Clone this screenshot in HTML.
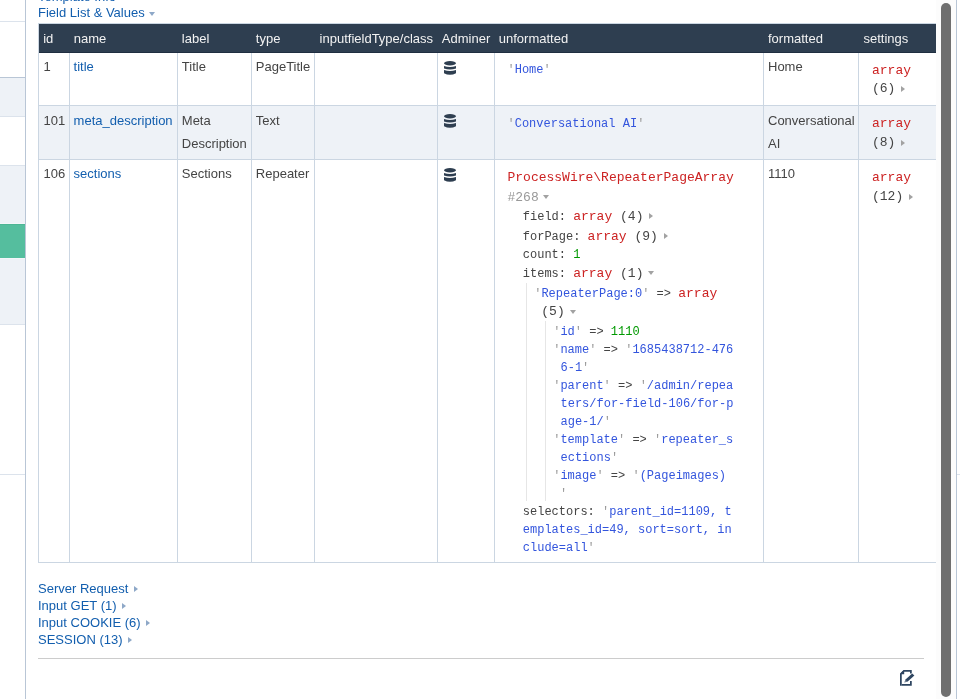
<!DOCTYPE html>
<html><head><meta charset="utf-8"><style>
html,body{margin:0;padding:0;background:#fff;width:960px;height:699px;overflow:hidden;position:relative}
#w{position:absolute;left:0;top:0;width:960px;height:699px;will-change:transform} #w>div{position:absolute}
.s{font-family:'Liberation Sans', sans-serif;font-size:13px;line-height:20px;white-space:pre}
.m{font-family:'Liberation Mono', monospace;font-size:12px;line-height:20px;white-space:pre;color:#444}
.t{font-size:13px} .str{color:#35D} .q{color:#999} .arr{color:#C22} .num{color:#090} .h{color:#999}
svg{display:block}
</style></head><body><div id="w">
<div style="left:0px;top:21px;width:25px;height:1px;background:#DCE3EC;"></div>
<div style="left:0px;top:77px;width:25px;height:1px;background:#B9C6D6;"></div>
<div style="left:0px;top:78px;width:25px;height:38px;background:#EEF2F7;"></div>
<div style="left:0px;top:116px;width:25px;height:1px;background:#DCE3EC;"></div>
<div style="left:0px;top:165px;width:25px;height:1px;background:#DCE3EC;"></div>
<div style="left:0px;top:166px;width:25px;height:57px;background:#EEF2F7;"></div>
<div style="left:0px;top:223px;width:25px;height:1px;background:#F4F6F9;"></div>
<div style="left:0px;top:224px;width:25px;height:34px;background:#55BE9E;"></div>
<div style="left:0px;top:224px;width:25px;height:1px;background:#4DB695;"></div>
<div style="left:0px;top:258px;width:25px;height:1px;background:#F4F6F9;"></div>
<div style="left:0px;top:259px;width:25px;height:65px;background:#EEF2F7;"></div>
<div style="left:0px;top:324px;width:25px;height:1px;background:#DCE3EC;"></div>
<div style="left:0px;top:474px;width:25px;height:1px;background:#DCE3EC;"></div>
<div style="left:25px;top:0px;width:1px;height:699px;background:#B9C6D6;"></div>
<div style="left:957px;top:474px;width:3px;height:1px;background:#DCE3EC;"></div>
<div style="left:936px;top:0px;width:20px;height:699px;background:#FCFCFC;"></div>
<div style="left:941px;top:3px;width:10px;height:694px;background:#6F6F6F;border-radius:5px"></div>
<div style="left:956px;top:0px;width:1px;height:699px;background:#B9C6D6;"></div>
<div class="s" style="left:38px;top:-13px;color:#125EAE;">Template Info</div>
<div class="s" style="left:38px;top:3px;color:#125EAE;">Field List &amp; Values</div>
<div style="left:149px;top:12px;width:0;height:0;border-left:3.0px solid transparent;border-right:3.0px solid transparent;border-top:4px solid #8EA8C8"></div>
<div style="left:38px;top:23px;width:898px;height:1px;background:#CBD6E2;"></div>
<div style="left:39px;top:24px;width:897px;height:28px;background:#2E3E50;"></div>
<div style="left:39px;top:52px;width:897px;height:1px;background:#1F2E40;"></div>
<div style="left:39px;top:106px;width:897px;height:53px;background:#EEF2F7;"></div>
<div style="left:38px;top:105px;width:898px;height:1px;background:#CBD6E2;"></div>
<div style="left:38px;top:159px;width:898px;height:1px;background:#CBD6E2;"></div>
<div style="left:38px;top:562px;width:898px;height:1px;background:#CBD6E2;"></div>
<div style="left:38px;top:23px;width:1px;height:540px;background:#CBD6E2;"></div>
<div style="left:69px;top:53px;width:1px;height:510px;background:#CBD6E2;"></div>
<div style="left:177px;top:53px;width:1px;height:510px;background:#CBD6E2;"></div>
<div style="left:251px;top:53px;width:1px;height:510px;background:#CBD6E2;"></div>
<div style="left:314px;top:53px;width:1px;height:510px;background:#CBD6E2;"></div>
<div style="left:437px;top:53px;width:1px;height:510px;background:#CBD6E2;"></div>
<div style="left:494px;top:53px;width:1px;height:510px;background:#CBD6E2;"></div>
<div style="left:763px;top:53px;width:1px;height:510px;background:#CBD6E2;"></div>
<div style="left:858px;top:53px;width:1px;height:510px;background:#CBD6E2;"></div>
<div class="s" style="left:43.2px;top:29px;color:#F2F2F2;">id</div>
<div class="s" style="left:73.8px;top:29px;color:#F2F2F2;">name</div>
<div class="s" style="left:181.8px;top:29px;color:#F2F2F2;">label</div>
<div class="s" style="left:255.8px;top:29px;color:#F2F2F2;">type</div>
<div class="s" style="left:319.6px;top:29px;color:#F2F2F2;">inputfieldType/class</div>
<div class="s" style="left:441.8px;top:29px;color:#F2F2F2;">Adminer</div>
<div class="s" style="left:498.8px;top:29px;color:#F2F2F2;">unformatted</div>
<div class="s" style="left:768px;top:29px;color:#F2F2F2;">formatted</div>
<div class="s" style="left:863.5px;top:29px;color:#F2F2F2;">settings</div>
<div class="s" style="left:43.5px;top:57px;color:#444;">1</div>
<div class="s" style="left:73.6px;top:57px;color:#125EAE;">title</div>
<div class="s" style="left:181.8px;top:57px;color:#444;">Title</div>
<div class="s" style="left:255.8px;top:57px;color:#444;">PageTitle</div>
<div class="s" style="left:768px;top:57px;color:#444;">Home</div>
<div class="s" style="left:43.5px;top:111px;color:#444;">101</div>
<div class="s" style="left:73.6px;top:111px;color:#125EAE;">meta_description</div>
<div class="s" style="left:181.8px;top:111px;color:#444;">Meta</div>
<div class="s" style="left:255.8px;top:111px;color:#444;">Text</div>
<div class="s" style="left:768px;top:111px;color:#444;">Conversational</div>
<div class="s" style="left:43.5px;top:164px;color:#444;">106</div>
<div class="s" style="left:73.6px;top:164px;color:#125EAE;">sections</div>
<div class="s" style="left:181.8px;top:164px;color:#444;">Sections</div>
<div class="s" style="left:255.8px;top:164px;color:#444;">Repeater</div>
<div class="s" style="left:768px;top:164px;color:#444;">1110</div>
<div class="s" style="left:181.8px;top:134px;color:#444;">Description</div>
<div class="s" style="left:768px;top:134px;color:#444;">AI</div>
<div style="left:444px;top:61px;width:12px;height:15px"><svg width="12" height="15" viewBox="0 0 12 15"><g fill="#2E3E50">
<ellipse cx="6" cy="2.25" rx="6" ry="2.25"/>
<path d="M0 5 Q6 7 12 5 V7.6 Q6 9.4 0 7.6 Z"/>
<path d="M0 9.1 Q6 11.1 12 9.1 V12.2 Q6 15.2 0 12.2 Z"/>
</g></svg></div>
<div style="left:444px;top:114px;width:12px;height:15px"><svg width="12" height="15" viewBox="0 0 12 15"><g fill="#2E3E50">
<ellipse cx="6" cy="2.25" rx="6" ry="2.25"/>
<path d="M0 5 Q6 7 12 5 V7.6 Q6 9.4 0 7.6 Z"/>
<path d="M0 9.1 Q6 11.1 12 9.1 V12.2 Q6 15.2 0 12.2 Z"/>
</g></svg></div>
<div style="left:444px;top:168px;width:12px;height:15px"><svg width="12" height="15" viewBox="0 0 12 15"><g fill="#2E3E50">
<ellipse cx="6" cy="2.25" rx="6" ry="2.25"/>
<path d="M0 5 Q6 7 12 5 V7.6 Q6 9.4 0 7.6 Z"/>
<path d="M0 9.1 Q6 11.1 12 9.1 V12.2 Q6 15.2 0 12.2 Z"/>
</g></svg></div>
<div class="m" style="left:507.5px;top:60px;"><span class="q">'</span><span class="str">Home</span><span class="q">'</span></div>
<div class="m" style="left:507.5px;top:114px;"><span class="q">'</span><span class="str">Conversational AI</span><span class="q">'</span></div>
<div class="m" style="left:872px;top:61px;"><span class="t"><span class="arr">array</span></span></div>
<div class="m" style="left:872px;top:79px;"><span class="t">(6)</span></div>
<div style="left:900.9px;top:86px;width:0;height:0;border-top:3.0px solid transparent;border-bottom:3.0px solid transparent;border-left:4px solid #A2A2A2"></div>
<div class="m" style="left:872px;top:114px;"><span class="t"><span class="arr">array</span></span></div>
<div class="m" style="left:872px;top:133px;"><span class="t">(8)</span></div>
<div style="left:900.9px;top:140px;width:0;height:0;border-top:3.0px solid transparent;border-bottom:3.0px solid transparent;border-left:4px solid #A2A2A2"></div>
<div class="m" style="left:872px;top:168px;"><span class="t"><span class="arr">array</span></span></div>
<div class="m" style="left:872px;top:187px;"><span class="t">(12)</span></div>
<div style="left:908.7px;top:194px;width:0;height:0;border-top:3.0px solid transparent;border-bottom:3.0px solid transparent;border-left:4px solid #A2A2A2"></div>
<div class="m" style="left:507.5px;top:168px;"><span class="t"><span class="arr">ProcessWire\RepeaterPageArray</span></span></div>
<div class="m" style="left:507.5px;top:188px;"><span class="t"><span class="h">#268</span></span></div>
<div class="m" style="left:522.8px;top:207px;">field: <span class="t"><span class="arr">array</span> (4)</span></div>
<div class="m" style="left:522.8px;top:227px;">forPage: <span class="t"><span class="arr">array</span> (9)</span></div>
<div class="m" style="left:522.8px;top:245px;">count: <span class="num">1</span></div>
<div class="m" style="left:522.8px;top:264px;">items: <span class="t"><span class="arr">array</span> (1)</span></div>
<div class="m" style="left:534.2px;top:284px;"><span class="q">'</span><span class="str">RepeaterPage:0</span><span class="q">'</span> =&gt; <span class="t"><span class="arr">array</span></span></div>
<div class="m" style="left:541.3px;top:302px;"><span class="t">(5)</span></div>
<div class="m" style="left:553.2px;top:322px;"><span class="q">'</span><span class="str">id</span><span class="q">'</span> =&gt; <span class="num">1110</span></div>
<div class="m" style="left:553.2px;top:340px;"><span class="q">'</span><span class="str">name</span><span class="q">'</span> =&gt; <span class="q">'</span><span class="str">1685438712-476</span></div>
<div class="m" style="left:560.5px;top:358px;"><span class="str">6-1</span><span class="q">'</span></div>
<div class="m" style="left:553.2px;top:376px;"><span class="q">'</span><span class="str">parent</span><span class="q">'</span> =&gt; <span class="q">'</span><span class="str">/admin/repea</span></div>
<div class="m" style="left:560.5px;top:394px;"><span class="str">ters/for-field-106/for-p</span></div>
<div class="m" style="left:560.5px;top:412px;"><span class="str">age-1/</span><span class="q">'</span></div>
<div class="m" style="left:553.2px;top:430px;"><span class="q">'</span><span class="str">template</span><span class="q">'</span> =&gt; <span class="q">'</span><span class="str">repeater_s</span></div>
<div class="m" style="left:560.5px;top:448px;"><span class="str">ections</span><span class="q">'</span></div>
<div class="m" style="left:553.2px;top:466px;"><span class="q">'</span><span class="str">image</span><span class="q">'</span> =&gt; <span class="q">'</span><span class="str">(Pageimages)</span></div>
<div class="m" style="left:560px;top:484px;"><span class="q">'</span></div>
<div class="m" style="left:522.8px;top:502px;">selectors: <span class="q">'</span><span class="str">parent_id=1109, t</span></div>
<div class="m" style="left:522.8px;top:520px;"><span class="str">emplates_id=49, sort=sort, in</span></div>
<div class="m" style="left:522.8px;top:538px;"><span class="str">clude=all</span><span class="q">'</span></div>
<div style="left:543px;top:195px;width:0;height:0;border-left:3.0px solid transparent;border-right:3.0px solid transparent;border-top:4px solid #A2A2A2"></div>
<div style="left:649px;top:213px;width:0;height:0;border-top:3.0px solid transparent;border-bottom:3.0px solid transparent;border-left:4px solid #A2A2A2"></div>
<div style="left:664.3px;top:233px;width:0;height:0;border-top:3.0px solid transparent;border-bottom:3.0px solid transparent;border-left:4px solid #A2A2A2"></div>
<div style="left:648px;top:271px;width:0;height:0;border-left:3.0px solid transparent;border-right:3.0px solid transparent;border-top:4px solid #A2A2A2"></div>
<div style="left:570px;top:310px;width:0;height:0;border-left:3.0px solid transparent;border-right:3.0px solid transparent;border-top:4px solid #A2A2A2"></div>
<div style="left:526px;top:283px;width:1px;height:218px;background:#E6E6E6;"></div>
<div style="left:545px;top:321px;width:1px;height:180px;background:#E6E6E6;"></div>
<div class="s" style="left:38px;top:579px;color:#125EAE;">Server Request</div>
<div style="left:134px;top:585.7px;width:0;height:0;border-top:3.0px solid transparent;border-bottom:3.0px solid transparent;border-left:4px solid #8EA8C8"></div>
<div class="s" style="left:38px;top:596px;color:#125EAE;">Input GET (1)</div>
<div style="left:122px;top:602.7px;width:0;height:0;border-top:3.0px solid transparent;border-bottom:3.0px solid transparent;border-left:4px solid #8EA8C8"></div>
<div class="s" style="left:38px;top:613px;color:#125EAE;">Input COOKIE (6)</div>
<div style="left:146px;top:619.7px;width:0;height:0;border-top:3.0px solid transparent;border-bottom:3.0px solid transparent;border-left:4px solid #8EA8C8"></div>
<div class="s" style="left:38px;top:630px;color:#125EAE;">SESSION (13)</div>
<div style="left:128.3px;top:636.7px;width:0;height:0;border-top:3.0px solid transparent;border-bottom:3.0px solid transparent;border-left:4px solid #8EA8C8"></div>
<div style="left:38px;top:658px;width:886px;height:1px;background:#CCCCCC;"></div>
<div style="left:900px;top:670px;width:16px;height:17px"><svg width="16" height="17" viewBox="0 0 16 17"><g fill="#2E4560">
<path d="M0 3.5 L3.5 0 H11.75 V3.6 H10 V1.75 H4.2 V4.2 H1.75 V15.75 H0 Z"/>
<path d="M0.5 3.5 L3.5 0.5 V3.5 Z"/>
<path d="M1.75 14 H10 V11 H11.75 V15.75 H1.75 Z"/>
<path d="M4.4 12.6 L5.5 9.4 L12.2 3.4 L14.4 5.6 L7.7 11.6 Z"/>
</g><path d="M5.3 11.8 L5.8 10.3 L6.7 11.2 Z" fill="#fff"/></svg></div>
</div></body></html>
